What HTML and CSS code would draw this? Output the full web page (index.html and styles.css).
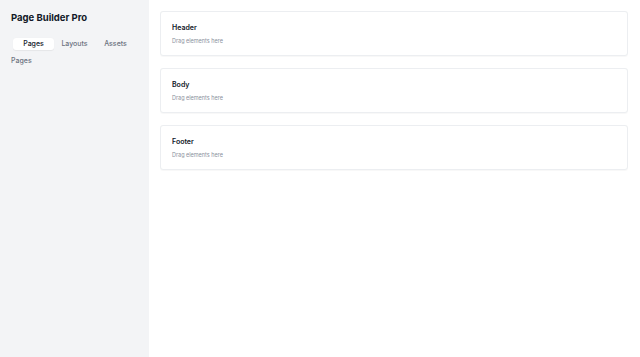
FILE: index.html
```html
<!DOCTYPE html>
<html lang="en">
<head>
  <meta charset="UTF-8">
  <title>Page Builder Pro</title>
  <link rel="stylesheet" href="styles.css">
</head>
<body>
  <div class="app">
    <!-- Barra lateral -->
    <aside class="sidebar">
      <h1 class="brand">Page Builder Pro</h1>
      <div class="tabs">
        <button class="tab active">Pages</button>
        <button class="tab">Layouts</button>
        <button class="tab">Assets</button>
      </div>
      <p class="section-label">Pages</p>
    </aside>

    <!-- Lienzo -->
    <main class="canvas">
      <div class="zone">
        <h3>Header</h3>
        <p>Drag elements here</p>
      </div>
      <div class="zone">
        <h3>Body</h3>
        <p>Drag elements here</p>
      </div>
      <div class="zone">
        <h3>Footer</h3>
        <p>Drag elements here</p>
      </div>
    </main>
  </div>
</body>
</html>
```

FILE: styles.css
```css
* {
  margin: 0;
  padding: 0;
  box-sizing: border-box;
}
body {
  font-family: Inter, "Noto Sans", sans-serif;
  background: #fff;
  color: #111827;
  width: 640px;
  height: 357px;
  overflow: hidden;
}
.app {
  display: flex;
  height: 357px;
}
/* Barra lateral */
.sidebar {
  width: 149px;
  flex-shrink: 0;
  background: #f3f4f6;
  padding: 11px 11px;
}
.brand {
  font-size: 9.5px;
  font-weight: 700;
  line-height: 14px;
  margin-bottom: 12px;
}
.tabs {
  display: grid;
  grid-template-columns: repeat(3, 1fr);
  padding: 1px 2px;
  border-radius: 4px;
  background: #f3f4f6;
  width: 127px;
}
.tab {
  font-family: inherit;
  font-size: 7px;
  font-weight: 500;
  line-height: 12px;
  height: 12px;
  border: none;
  background: transparent;
  color: #6b7280;
  border-radius: 3px;
}
.tab.active {
  background: #fff;
  color: #111827;
  box-shadow: 0 0.5px 1px rgba(0, 0, 0, 0.06);
}
.section-label {
  font-size: 7px;
  font-weight: 500;
  line-height: 10px;
  color: #6b7280;
  margin-top: 5px;
}
/* Lienzo */
.canvas {
  flex: 1;
  padding: 11px 12px 11px 11px;
  display: flex;
  flex-direction: column;
  gap: 12px;
}
.zone {
  height: 45px;
  border: 1px solid #eceef1;
  border-radius: 3px;
  background: #fff;
  padding: 10px 11px;
  box-shadow: 0 0.5px 1px rgba(0, 0, 0, 0.03);
}
.zone h3 {
  font-size: 7px;
  font-weight: 600;
  line-height: 12px;
}
.zone p {
  font-size: 5.5px;
  line-height: 8px;
  color: #8b919c;
  margin-top: 3px;
}
```
